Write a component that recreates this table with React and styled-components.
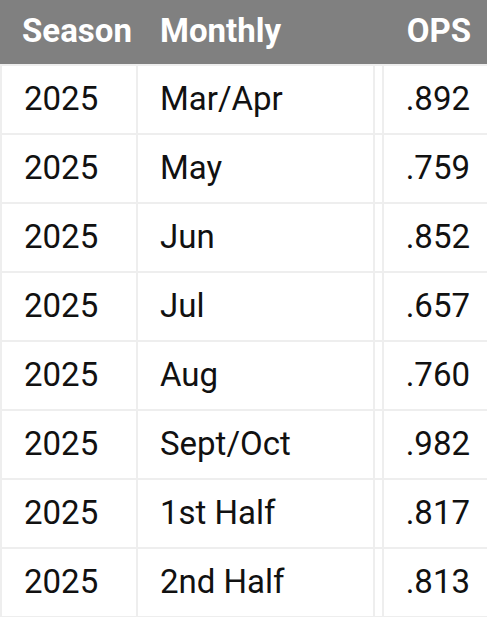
import React from 'react';
import styled, { createGlobalStyle } from 'styled-components';

/* ===== COLORS ===== */
const WHITE = '#FFFFFF';
const HEADER_GRAY = '#808080';
const GRID = '#EEEEEE';
const TEXT = '#111111';

const GlobalStyle = createGlobalStyle`
  html, body {
    margin: 0;
    padding: 0;
    background: ${WHITE};
  }
  body {
    font-family: Roboto, "Liberation Sans", sans-serif;
  }
`;

/* ===== TABLE ===== */

const Viewport = styled.div`
  width: 487px;
  height: 617px;
  overflow: hidden;
  background: ${WHITE};
`;

const COLUMNS = '138px 237px 9px 1fr';

const HeaderRow = styled.div`
  display: grid;
  grid-template-columns: ${COLUMNS};
  height: 66px;
  box-sizing: border-box;
  background: ${HEADER_GRAY};
  border-bottom: 2px solid ${GRID};
`;

const HeadCell = styled.div`
  display: flex;
  align-items: center;
  justify-content: ${(p) => (p.$right ? 'flex-end' : 'flex-start')};
  padding: 0 ${(p) => (p.$right ? '16px' : '0')} 4px ${(p) => (p.$right ? '0' : '22px')};
  color: ${WHITE};
  font-size: 33px;
  font-weight: 700;
  white-space: nowrap;
`;

const Row = styled.div`
  display: grid;
  grid-template-columns: ${COLUMNS};
  height: 69px;
`;

const Cell = styled.div`
  display: flex;
  align-items: center;
  justify-content: ${(p) => (p.$right ? 'flex-end' : 'flex-start')};
  box-sizing: border-box;
  min-width: 0;
  padding: 0 ${(p) => (p.$right ? '17px' : '0')} 2px ${(p) => (p.$right ? '0' : '22px')};
  color: ${TEXT};
  font-size: 33px;
  font-weight: 400;
  white-space: nowrap;
  border-bottom: 2px solid ${GRID};
  border-right: ${(p) => (p.$last ? 'none' : `2px solid ${GRID}`)};
  border-left: ${(p) => (p.$first ? `2px solid ${GRID}` : 'none')};
`;

const Spacer = styled.div`
  box-sizing: border-box;
  min-width: 0;
  border-bottom: ${(p) => (p.$head ? 'none' : `2px solid ${GRID}`)};
  border-right: ${(p) => (p.$head ? 'none' : `2px solid ${GRID}`)};
`;

const ROWS = [
  ['2025', 'Mar/Apr', '.892'],
  ['2025', 'May', '.759'],
  ['2025', 'Jun', '.852'],
  ['2025', 'Jul', '.657'],
  ['2025', 'Aug', '.760'],
  ['2025', 'Sept/Oct', '.982'],
  ['2025', '1st Half', '.817'],
  ['2025', '2nd Half', '.813'],
];

const App = () => {
  return (
    <Viewport>
      <GlobalStyle />
      <HeaderRow>
        <HeadCell>Season</HeadCell>
        <HeadCell>Monthly</HeadCell>
        <Spacer $head />
        <HeadCell $right>OPS</HeadCell>
      </HeaderRow>
      {ROWS.map(([season, split, ops]) => (
        <Row key={split}>
          <Cell $first>{season}</Cell>
          <Cell>{split}</Cell>
          <Spacer />
          <Cell $right $last>{ops}</Cell>
        </Row>
      ))}
    </Viewport>
  );
};

export default App;
